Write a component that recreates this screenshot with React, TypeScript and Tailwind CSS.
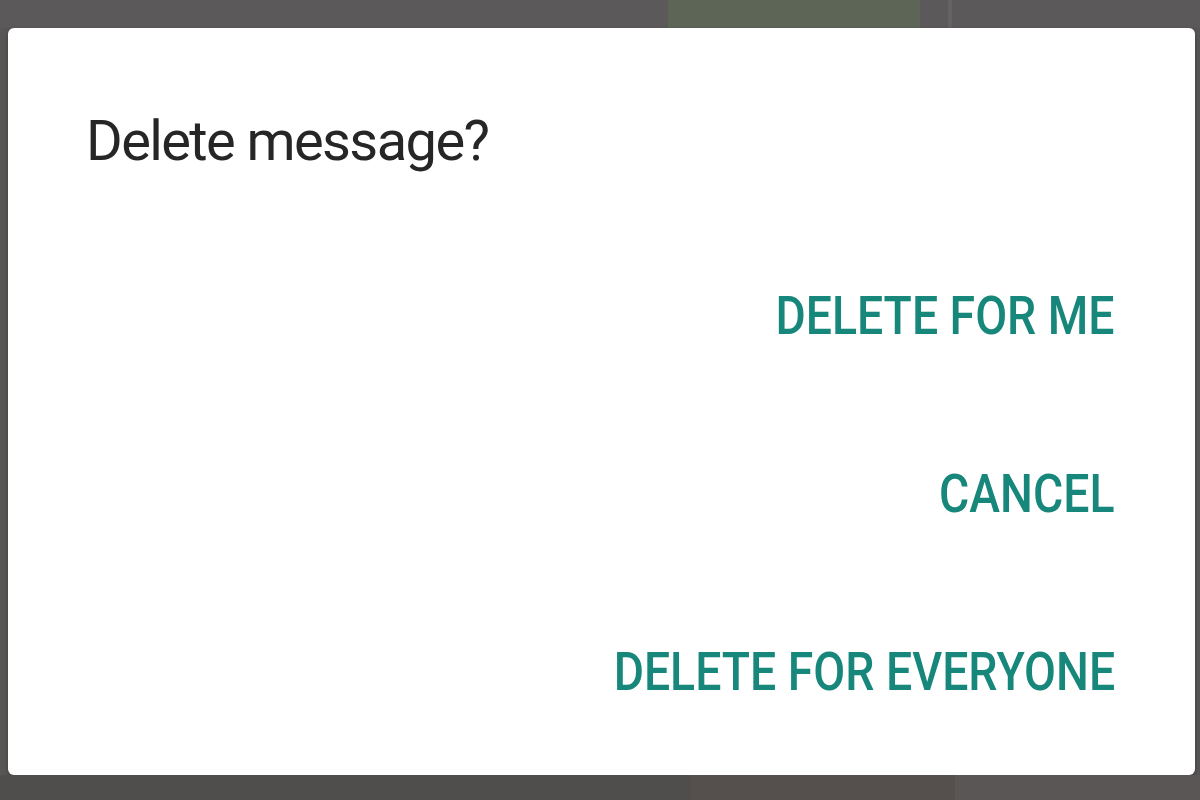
import React from "react";

export default function App() {
  return (
    <div
      className="w-[1200px] h-[800px] overflow-hidden bg-[#585655] flex flex-col"
      style={{ fontFamily: "Roboto, 'Noto Sans', sans-serif" }}
    >
      <div className="h-[28px] shrink-0 bg-[linear-gradient(90deg,#5b5959_0px,#5b5959_668px,#5d6556_668px,#5d6556_920px,#5b5959_920px,#5b5959_948px,#646262_948px,#646262_952px,#5b5959_952px)]" />
      <div className="flex pl-[8px]">
        <div className="w-[1187px] h-[747px] bg-white rounded-[6px] shadow-[0_2px_4px_rgba(0,0,0,0.3)] flex flex-col pl-[78px] pr-[80px] pt-[85px]">
          <div className="text-[56px] leading-[56px] text-[#262626] font-normal tracking-[-1.6px]">
            Delete message?
          </div>
          <div className="flex flex-col items-end mt-[121px] gap-[125px]">
            <div className="text-[53px] leading-[53px] font-medium text-[#16877a] scale-x-[0.875] origin-right whitespace-nowrap">DELETE FOR ME</div>
            <div className="text-[53px] leading-[53px] font-medium text-[#16877a] scale-x-[0.875] origin-right whitespace-nowrap">CANCEL</div>
            <div className="text-[53px] leading-[53px] font-medium text-[#16877a] scale-x-[0.875] origin-right whitespace-nowrap">DELETE FOR EVERYONE</div>
          </div>
        </div>
      </div>
      <div className="flex-1 bg-[linear-gradient(90deg,#4f4e4d_0px,#4f4e4d_690px,#55504d_690px,#55504d_955px,#5a5655_955px)]" />
    </div>
  );
}
